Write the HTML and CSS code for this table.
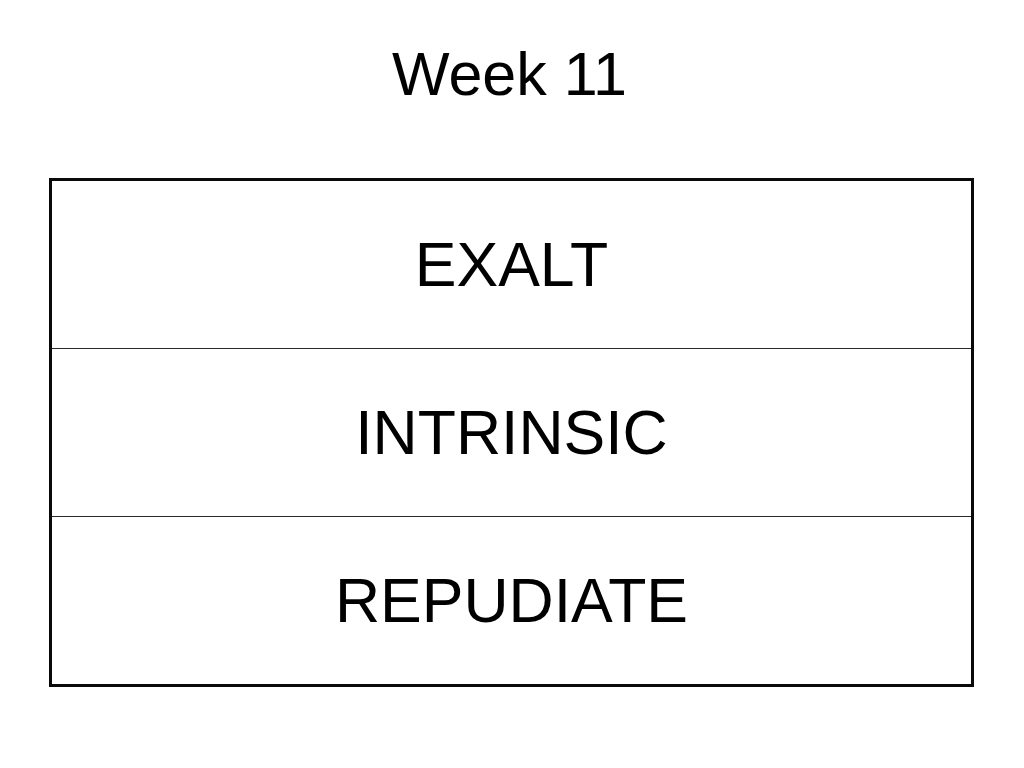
FILE: index.html
```html
<!DOCTYPE html>
<html lang="en">
<head>
<meta charset="utf-8">
<title>Week 11</title>
<link rel="stylesheet" href="styles.css">
</head>
<body>
  <main class="slide">
    <h1 class="title">Week 11</h1>
    <div class="words">
      <div class="word">EXALT</div>
      <div class="word">INTRINSIC</div>
      <div class="word">REPUDIATE</div>
    </div>
  </main>
</body>
</html>
```

FILE: styles.css
```css
html, body {
  margin: 0;
  padding: 0;
  background: #ffffff;
}

.slide {
  width: 1024px;
  height: 768px;
  box-sizing: border-box;
  padding-top: 44px;
  display: flex;
  flex-direction: column;
  align-items: flex-start;
  font-family: "Liberation Sans", Arial, sans-serif;
  color: #000;
}

.title {
  margin: 0;
  width: 1024px;
  height: 60px;
  line-height: 60px;
  font-size: 61px;
  font-weight: normal;
  text-align: center;
  padding-right: 5px;
  box-sizing: border-box;
}

.words {
  margin-top: 74px;
  margin-left: 49px;
  width: 925px;
  box-sizing: border-box;
  border: 3px solid #0a0a0a;
  display: flex;
  flex-direction: column;
}

.word {
  height: 167px;
  display: flex;
  align-items: center;
  justify-content: center;
  font-size: 62.5px;
  line-height: 67px;
}

.word + .word {
  border-top: 1px solid #2a2a2a;
}
```
